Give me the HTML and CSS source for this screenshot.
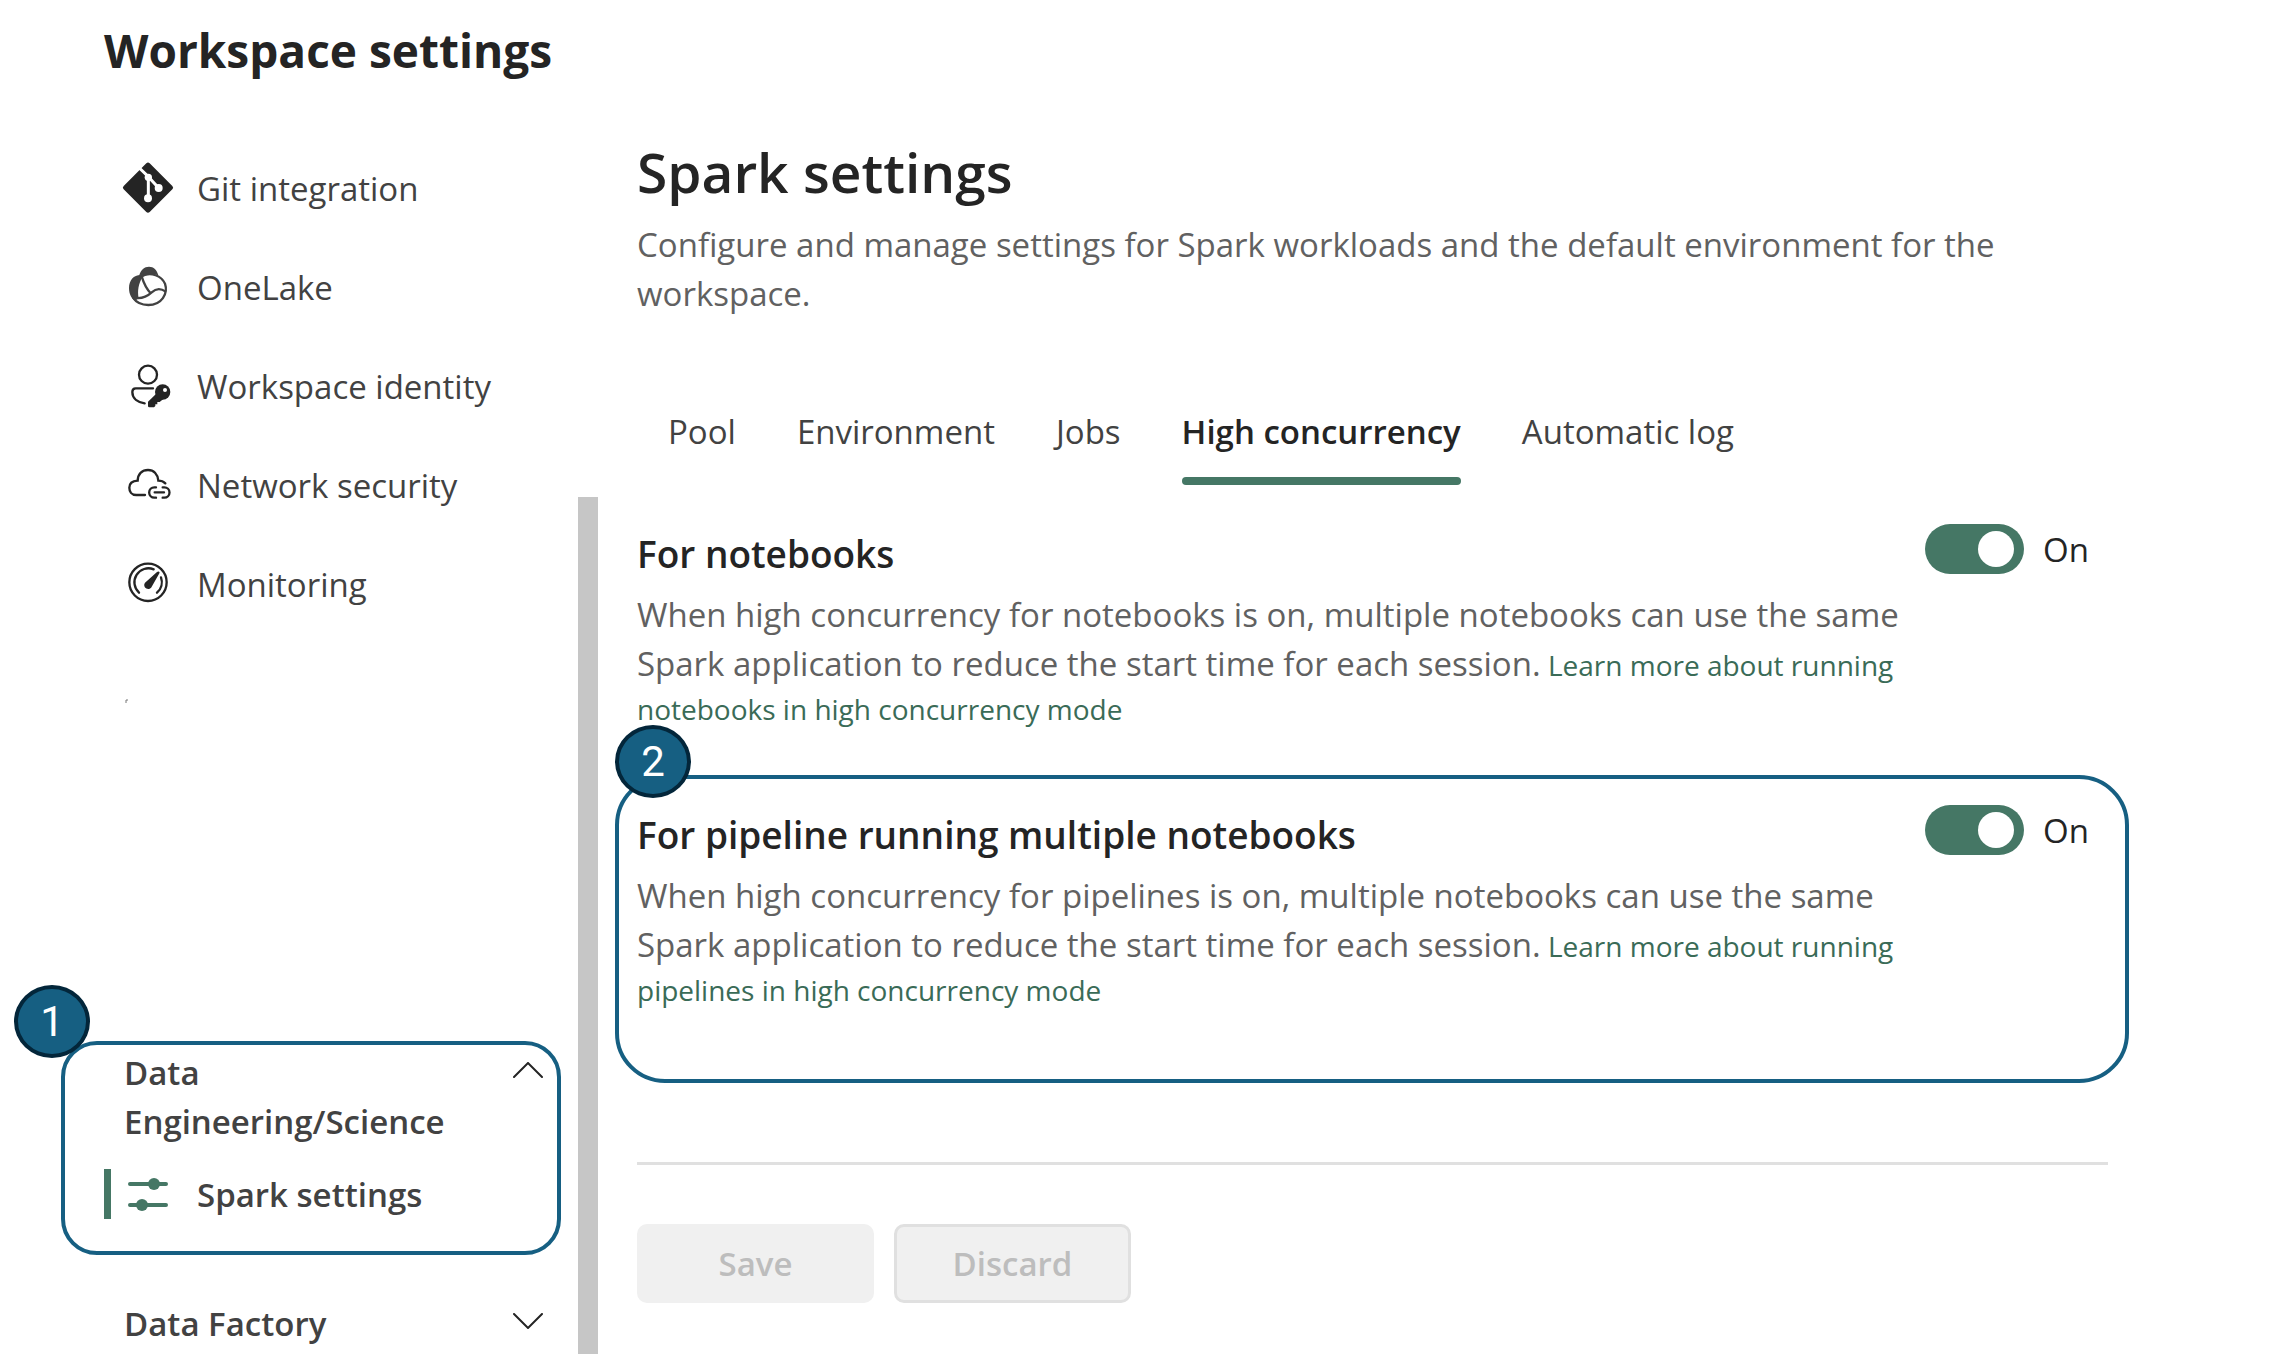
FILE: index.html
```
<!DOCTYPE html>
<html lang="en">
<head>
<meta charset="utf-8">
<meta name="viewport" content="width=device-width, initial-scale=1">
<title>Workspace settings</title>
<link rel="stylesheet" href="styles.css">
</head>
<body>
<div class="layout">
  <aside class="sidebar">
    <h1 class="sidebar-title">Workspace settings</h1>
    <nav aria-label="Workspace settings">
      <a class="nav-item" href="#git">
        <svg class="icon" viewBox="0 0 150 150" aria-hidden="true">
          <path d="M70-2Q75-7 80-2L148 66Q153 71 148 76L80 144Q75 149 70 144L2 76Q-3 71 2 66Z" fill="#242424"/>
          <g fill="none" stroke="#fff" stroke-width="9"><path d="M46 9L76 38V103M76 38L107 72"/></g>
          <g fill="#fff"><circle cx="76" cy="40" r="11"/><circle cx="75" cy="103" r="12"/><circle cx="107" cy="72" r="12"/></g>
        </svg>
        <span>Git integration</span>
      </a>
      <a class="nav-item" href="#onelake">
        <svg class="icon" viewBox="0 0 150 150" aria-hidden="true">
          <g fill="#424242">
            <path d="M56 36C34 34 18 50 18 75C18 95 26 106 36 114L47 105C43 84 46 62 60 40Z"/>
            <path d="M48 38C54 20 64 11 78 11C92 11 102 20 106 37C90 31 74 33 58 42Z"/>
          </g>
          <g fill="none" stroke="#424242" stroke-width="7">
            <path d="M56 40C84 24 116 40 126 62C136 92 116 126 76 126C58 126 40 119 30 104"/>
            <path d="M56 40C62 60 74 82 85 93M40 105C60 107 74 99 86 88C98 77 114 76 128 86"/>
          </g>
        </svg>
        <span>OneLake</span>
      </a>
      <a class="nav-item" href="#identity">
        <svg class="icon" viewBox="0 0 150 150" aria-hidden="true">
          <g fill="none" stroke="#242424" stroke-width="7" stroke-linecap="round">
            <circle cx="75" cy="38" r="27"/>
            <path d="M90 79H38Q28 79 28 90C28 110 45 121 65 124"/>
          </g>
          <path d="M99 96L75 119V132Q75 136 79 136H93L97 132V127H103V120H110L122 110Z" fill="#242424"/>
          <circle cx="119" cy="90" r="23" fill="#242424"/><circle cx="126" cy="84" r="6" fill="#fff"/>
        </svg>
        <span>Workspace identity</span>
      </a>
      <a class="nav-item" href="#network">
        <svg class="icon" viewBox="0 0 150 150" aria-hidden="true">
          <g fill="none" stroke="#242424" stroke-width="7" stroke-linecap="round">
            <path d="M66 102H40C25 102 19 91 19 80C19 68 28 60 44 59C45 38 58 27 75 27C92 27 104 39 106 59C116 59 122 62 127 67"/>
            <path d="M99 79H94A15 15 0 0 0 94 110H99M119 79H124A15 15 0 0 1 124 110H119M95 94H123"/>
          </g>
        </svg>
        <span>Network security</span>
      </a>
      <a class="nav-item" href="#monitoring">
        <svg class="icon" viewBox="0 0 150 150" aria-hidden="true">
          <g fill="none" stroke="#242424" stroke-width="7" stroke-linecap="round">
            <circle cx="75" cy="67" r="56"/>
            <path d="M48 98A42 42 0 0 1 92 28M114 52A42 42 0 0 1 102 98"/>
          </g>
          <path d="M102 36Q108 32 110 38L87 79A12 12 0 1 1 66 68Z" fill="#242424"/>
        </svg>
        <span>Monitoring</span>
      </a>
    </nav>
    <svg class="tick" viewBox="0 0 4 4" aria-hidden="true"><path d="M1 4V1H3" fill="none" stroke="#777"/></svg>

    <section class="group group-marked">
      <span class="badge badge-1">1</span>
      <button class="group-head" type="button" aria-expanded="true">
        <span>Data Engineering/Science</span>
        <svg class="chevron" viewBox="0 0 30 16" aria-hidden="true"><path d="M1 15L15 1L29 15"/></svg>
      </button>
      <a class="sub-item" href="#spark" aria-current="page">
        <svg class="icon" viewBox="0 0 50 50" aria-hidden="true">
          <path d="M7 15H43M7 36H43" fill="none" stroke="#457765" stroke-width="4" stroke-linecap="round"/>
          <circle cx="31" cy="15" r="6" fill="#457765"/><circle cx="19" cy="36" r="6" fill="#457765"/>
        </svg>
        <span>Spark settings</span>
      </a>
    </section>
    <section class="group">
      <button class="group-head" type="button" aria-expanded="false">
        <span>Data Factory</span>
        <svg class="chevron" viewBox="0 0 30 16" aria-hidden="true"><path d="M1 1L15 15L29 1"/></svg>
      </button>
    </section>
  </aside>

  <div class="scrollbar" aria-hidden="true"></div>

  <main class="content">
    <h2 class="page-title">Spark settings</h2>
    <p class="lead">Configure and manage settings for Spark workloads and the default environment for the workspace.</p>

    <div class="tabs" role="tablist">
      <button class="tab" type="button" role="tab" aria-selected="false">Pool</button>
      <button class="tab" type="button" role="tab" aria-selected="false">Environment</button>
      <button class="tab" type="button" role="tab" aria-selected="false">Jobs</button>
      <button class="tab" type="button" role="tab" aria-selected="true">High concurrency</button>
      <button class="tab" type="button" role="tab" aria-selected="false">Automatic log</button>
    </div>

    <section class="setting">
      <div class="setting-text">
        <h3>For notebooks</h3>
        <p><span>When high concurrency for notebooks is on, multiple notebooks can use the same Spark application to reduce the start time for each session.</span> <a href="#learn-notebooks">Learn more about running notebooks in high concurrency mode</a></p>
      </div>
      <label class="switch"><input type="checkbox" role="switch" checked>On</label>
    </section>

    <section class="setting setting-marked">
      <span class="badge badge-2">2</span>
      <div class="setting-text">
        <h3>For pipeline running multiple notebooks</h3>
        <p><span>When high concurrency for pipelines is on, multiple notebooks can use the same Spark application to reduce the start time for each session.</span> <a href="#learn-pipelines">Learn more about running pipelines in high concurrency mode</a></p>
      </div>
      <label class="switch"><input type="checkbox" role="switch" checked>On</label>
    </section>

    <footer class="actions">
      <button class="btn" type="button" disabled>Save</button>
      <button class="btn btn-outline" type="button" disabled>Discard</button>
    </footer>
  </main>
</div>
</body>
</html>
```
FILE: styles.css
```
* { box-sizing: border-box; }

body {
  margin: 0;
  background: #fff;
  color: #242424;
  font: 400 33px/49px "Open Sans", "Noto Sans", sans-serif;
}

h1, h2, h3, p { margin: 0; }

button {
  margin: 0;
  padding: 0;
  border: 0;
  background: none;
  color: inherit;
  font: inherit;
  text-align: left;
}

a { color: inherit; text-decoration: none; }

.layout {
  display: grid;
  grid-template-columns: 578px 20px 1fr;
  min-height: 100vh;
}

/* Sidebar */
.sidebar {
  display: flex;
  flex-direction: column;
  padding-top: 18px;
  color: #424242;
}

.sidebar-title {
  margin: 0 0 57px 104px;
  color: #242424;
  font-size: 46px;
  font-weight: 700;
  line-height: 64px;
}

.nav-item {
  display: flex;
  align-items: center;
  gap: 24px;
  height: 99px;
  padding-left: 123px;
}

.icon {
  flex: none;
  width: 50px;
  height: 50px;
  overflow: visible;
}

.tick {
  width: 4px;
  height: 4px;
  margin: 65px 0 338px 125px;
}

.group {
  margin: 44px 17px 0 61px;
  padding: 0 18px 0 63px;
}

.group-marked {
  position: relative;
  margin-top: 0;
  padding: 3px 14px 32px 59px;
  border: 4px solid #165f82;
  border-radius: 36px;
}

.group-head {
  display: flex;
  justify-content: space-between;
  align-items: flex-start;
  gap: 40px;
  width: 100%;
  font-weight: 600;
}

.chevron {
  flex: none;
  width: 30px;
  height: 16px;
  margin-top: 14px;
  fill: none;
  stroke: #242424;
  stroke-width: 2;
  stroke-linecap: round;
}

.sub-item {
  display: flex;
  align-items: center;
  gap: 24px;
  height: 50px;
  margin: 23px 0 0 -20px;
  padding-left: 12px;
  border-left: 7px solid #457765;
  font-weight: 600;
}

.scrollbar {
  margin-top: 497px;
  background: #c6c6c6;
}

/* Content */
.content { padding: 139px 175px 40px 39px; }

.page-title {
  margin-bottom: 15px;
  font-size: 55px;
  font-weight: 600;
  line-height: 66px;
}

.lead { color: #616161; }

.tabs {
  display: flex;
  gap: 61px;
  margin: 89px 0 39px 31px;
  color: #424242;
}

.tab {
  padding-bottom: 21px;
  border-bottom: 8px solid transparent;
}

.tab[aria-selected="true"] {
  position: relative;
  color: #242424;
  font-weight: 600;
}

.tab[aria-selected="true"]::after {
  content: "";
  position: absolute;
  right: 0;
  bottom: -8px;
  left: 0;
  height: 8px;
  border-radius: 4px;
  background: #457765;
}

.setting {
  display: grid;
  grid-template-columns: 1fr auto;
  gap: 16px;
}

.setting-marked {
  position: relative;
  margin: 44px -21px 79px -22px;
  padding: 26px 17px 67px 18px;
  border: 4px solid #165f82;
  border-radius: 50px;
}

.setting-text { padding-top: 3px; }

.setting h3 {
  margin-bottom: 9px;
  font-size: 37px;
  font-weight: 600;
  line-height: 54px;
}

.setting p {
  color: #3a6b57;
  font-size: 28px;
  line-height: 43px;
}

.setting p span {
  color: #616161;
  font-size: 33px;
  line-height: 49px;
}

.switch {
  display: flex;
  align-items: center;
  align-self: start;
  gap: 19px;
  padding-right: 19px;
}

.switch input {
  appearance: none;
  width: 99px;
  height: 50px;
  margin: 0;
  padding: 7px 10px;
  border-radius: 25px;
  background: #457765;
}

.switch input::before {
  content: "";
  display: block;
  width: 36px;
  height: 36px;
  margin-left: auto;
  border-radius: 50%;
  background: #fff;
}

.actions {
  display: flex;
  gap: 20px;
  padding-top: 59px;
  border-top: 3px solid #e0e0e0;
}

.btn {
  width: 237px;
  height: 79px;
  border-radius: 10px;
  background: #f0f0f0;
  color: #bdbdbd;
  font-weight: 600;
  text-align: center;
}

.btn-outline { border: 3px solid #e0e0e0; }

/* Numbered callouts */
.badge {
  position: absolute;
  display: grid;
  place-items: center;
  width: 76px;
  height: 73px;
  border: 4px solid #03263a;
  border-radius: 50%;
  background: #165f82;
  color: #fff;
  font-family: Roboto, sans-serif;
  font-size: 42px;
}

.badge-1 { top: -60px; left: -51px; }
.badge-2 { top: -54px; left: -4px; }
```
